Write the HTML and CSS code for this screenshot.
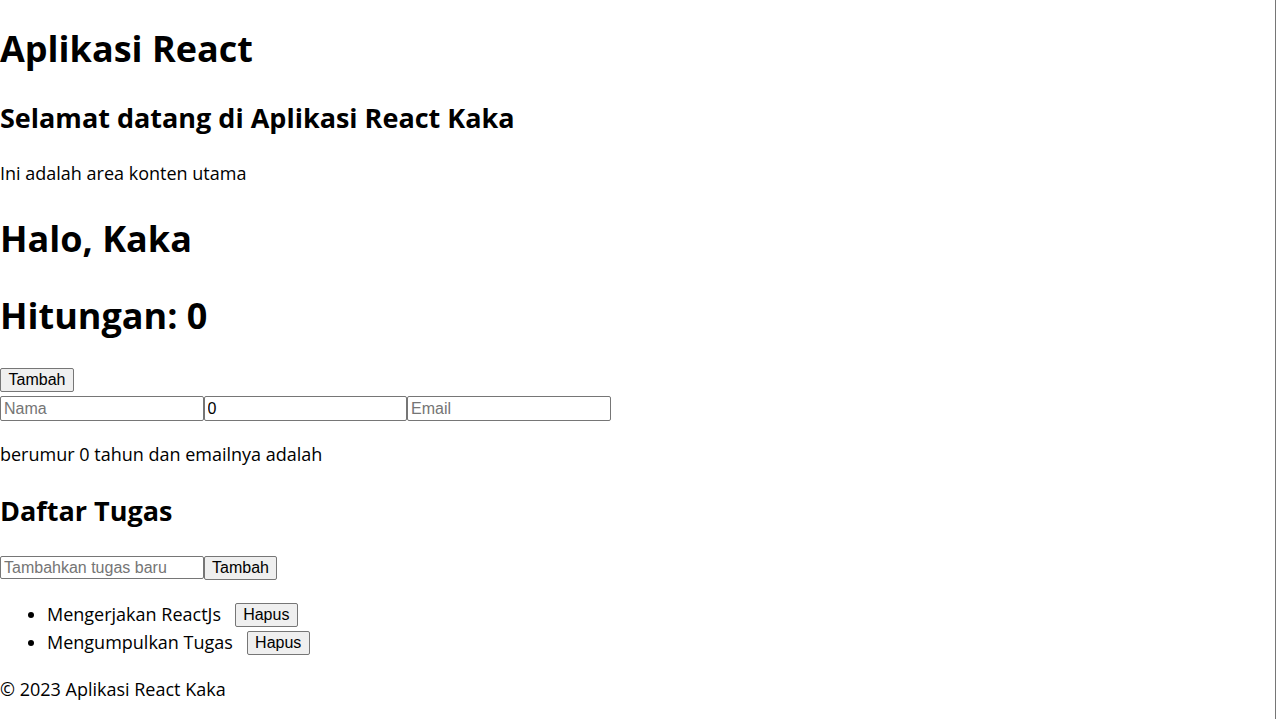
FILE: index.html
```html
<!DOCTYPE html>
<html lang="id">
<head>
<meta charset="utf-8">
<title>Aplikasi React</title>
<link rel="stylesheet" href="styles.css">
</head>
<body>
<div class="app">
  <header class="header">
    <h1 class="title">Aplikasi React</h1>
  </header>
  <main class="main">
    <h2 class="welcome">Selamat datang di Aplikasi React Kaka</h2>
    <p class="lead">Ini adalah area konten utama</p>
    <h1 class="greet">Halo, Kaka</h1>
    <h1 class="count">Hitungan: 0</h1>
    <div class="counter-row"><button class="btn" type="button">Tambah</button></div>
    <div class="form-row">
      <input class="field" type="text" placeholder="Nama"><input class="field" type="number" value="0"><input class="field" type="email" placeholder="Email">
    </div>
    <p class="summary">berumur 0 tahun dan emailnya adalah</p>
    <h2 class="tasks-title">Daftar Tugas</h2>
    <div class="task-form">
      <input class="field field-task" type="text" placeholder="Tambahkan tugas baru"><button class="btn" type="button">Tambah</button>
    </div>
    <ul class="task-list">
      <li class="task">Mengerjakan ReactJs <button class="btn btn-del" type="button">Hapus</button></li>
      <li class="task">Mengumpulkan Tugas <button class="btn btn-del" type="button">Hapus</button></li>
    </ul>
  </main>
  <footer class="footer">
    <p class="copy">© 2023 Aplikasi React Kaka</p>
  </footer>
</div>
</body>
</html>
```

FILE: styles.css
```css
html, body {
  margin: 0;
  padding: 0;
  background: #ffffff;
}

body {
  font-family: "Open Sans", "Noto Sans", sans-serif;
  font-size: 18px;
  line-height: 24px;
  color: #000000;
}

.app {
  display: flow-root;
  min-height: 100vh;
  box-sizing: border-box;
  border-right: 1px solid #767676;
}

h1, h2, p, ul {
  margin: 0;
}

.title {
  font-size: 36px;
  line-height: 48px;
  font-weight: 700;
  margin-top: 25px;
}

.welcome {
  font-size: 27px;
  line-height: 36px;
  font-weight: 700;
  margin-top: 27px;
}

.lead {
  margin-top: 25px;
}

.greet {
  font-size: 36px;
  line-height: 48px;
  margin-top: 30px;
}

.count {
  font-size: 36px;
  line-height: 48px;
  margin-top: 29px;
}

.counter-row {
  display: flex;
  margin-top: 28px;
}

.form-row {
  display: flex;
  margin-top: 4px;
}

.btn {
  font-family: "Liberation Sans", Arial, sans-serif;
  font-size: 16px;
  line-height: 18px;
  color: #000000;
  background: #efefef;
  border: 1px solid #767676;
  border-radius: 2px;
  padding: 2px 7.5px;
  margin: 0;
  height: 24px;
  box-sizing: border-box;
}

.field {
  font-family: "Liberation Sans", Arial, sans-serif;
  font-size: 16px;
  color: #000000;
  background: #ffffff;
  border: 1px solid #767676;
  border-radius: 2px;
  padding: 1px 3px;
  margin: 0;
  width: 203.5px;
  height: 25px;
  box-sizing: border-box;
  -moz-appearance: textfield;
  appearance: textfield;
}

.field::placeholder {
  color: #757575;
}

.field::-webkit-inner-spin-button,
.field::-webkit-outer-spin-button {
  -webkit-appearance: none;
  margin: 0;
}

.summary {
  margin-top: 21px;
}

.tasks-title {
  font-size: 27px;
  line-height: 36px;
  font-weight: 700;
  margin-top: 27px;
}

.task-form {
  display: flex;
  align-items: flex-start;
  margin-top: 27px;
}

.field-task {
  height: 23px;
}

.task-list {
  margin-top: 20px;
  padding-left: 47px;
}

.task {
  line-height: 28px;
}

.btn-del {
  margin-left: 9px;
  vertical-align: middle;
  position: relative;
  top: -1px;
}

.footer {
  margin-top: 21px;
}
```
